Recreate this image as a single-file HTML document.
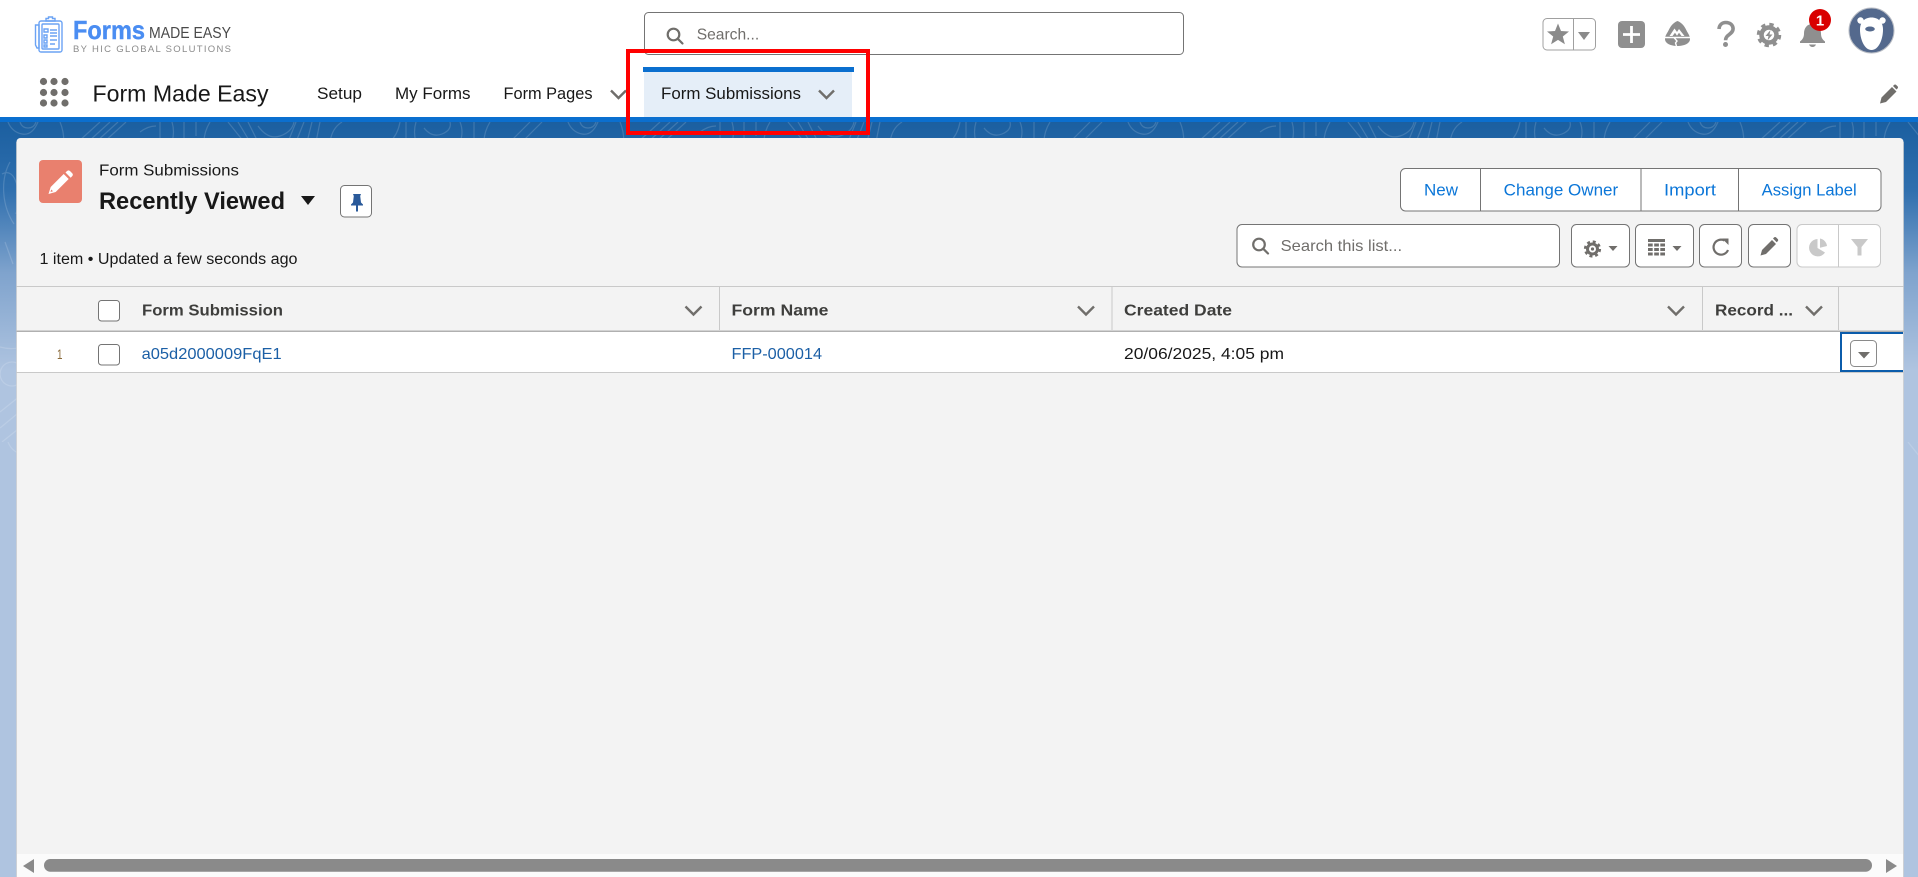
<!DOCTYPE html>
<html lang="en">
<head>
<meta charset="utf-8">
<title>Form Made Easy</title>
<style>
html,body{margin:0;padding:0;width:1918px;height:877px;overflow:hidden;background:#fff}
svg{display:block}
text{font-family:"Liberation Sans",Arial,sans-serif;white-space:pre}
</style>
</head>
<body>
<svg xmlns="http://www.w3.org/2000/svg" width="1918" height="877" viewBox="0 0 1918 877">
<defs>
<linearGradient id="bg" x1="0" y1="122" x2="0" y2="877" gradientUnits="userSpaceOnUse">
<stop offset="0" stop-color="#1b5fa0"/>
<stop offset="0.09" stop-color="#2f6fae"/>
<stop offset="0.2" stop-color="#7fa3cd"/>
<stop offset="0.33" stop-color="#afc4e0"/>
<stop offset="1" stop-color="#afc4e0"/>
</linearGradient>
<pattern id="contour" x="0" y="122" width="560" height="320" patternUnits="userSpaceOnUse">
<g fill="none" stroke="#fff" stroke-opacity=".15" stroke-width="1.200">
<path d="M8 0q4 10 14 12t16-12M20 0q2 6 8 6t8-6M60 0c6 14 4 30 0 40M78 20L100 0M88 20L110 0M96 20L118 0M104 20L126 0M140 10q8-6 16-6M160 0v20M172 0q3 10 0 20M184 0v20M196 0v14M210 0q-6 10-6 20M228 0l16 20M238 0l12 20M248 0l10 20M258 4q10 14 22 10t14-14M296 0l-8 20M304 0l-8 20M312 0l-5 20M320 0l-4 20M330 20q2-14 12-20M390 20q8-8 10-20M406 0v20M416 0q-3 10 0 20M424 6q8 10 18 6t8-12M460 0q4 10 0 20M474 0v20M490 0q-6 10-6 20M510 20l20-20M522 20l20-20"/>
<path d="M10 40c-10 18-8 44 4 62M2 52c14-8 20 20 14 40M5 120l8 22M30 160c-14 10-14 40 0 52M0 225q14 4 28-2M12 240a12 12 0 1 0 .1 0M0 290l30-24M0 306l34-28M2 320l30-24"/>
</g>
</pattern>
</defs>

<!-- page background -->
<rect x="0" y="122" width="1918" height="755" fill="url(#bg)"/>
<rect x="0" y="122" width="1918" height="340" fill="url(#contour)"/>

<!-- white header -->
<rect x="0" y="0" width="1918" height="117" fill="#fff"/>
<rect x="0" y="117" width="1918" height="5" fill="#0b6fcf"/>

<!-- logo -->
<g fill="none" stroke="#6ba3f4" stroke-width="1.400">
<rect x="39" y="21" width="23" height="31" rx="2"/>
<rect x="42" y="24" width="17" height="25" rx="1"/>
<path d="M46 21v-2.500h2.500v-1.500h4v1.500h2.500v2.500z"/>
<path d="M35.500 25h3.500v23h-2l-1.500-3z"/>
<path d="M44 29h4v3h-4zM44 35h3v3h-3zM44 40h3v3h-3zM44 45h3v2h-3zM50 30h7M50 33h7M50 36h7M50 40h7M50 44h5"/>
</g>
<text x="73" y="39" font-size="26" font-weight="700" fill="#4a8df2" stroke="#4a8df2" stroke-width=".4" textLength="72" lengthAdjust="spacingAndGlyphs">Forms</text>
<text x="149" y="38" font-size="15.500" fill="#4a4a4a" textLength="82" lengthAdjust="spacingAndGlyphs">MADE EASY</text>
<text x="73" y="52" font-size="9.500" fill="#8b8b8b" textLength="158" lengthAdjust="spacing">BY HIC GLOBAL SOLUTIONS</text>

<!-- global search -->
<rect x="644.500" y="12.500" width="539" height="42" rx="4" fill="#fff" stroke="#747474"/>
<g fill="none" stroke="#706e6b" stroke-width="2.200">
<circle cx="673.500" cy="34.500" r="5.800"/>
<path d="M677.800 38.800l4.700 4.700" stroke-linecap="round"/>
</g>
<text x="696.700" y="39.500" font-size="16" fill="#706e6b" textLength="62.500" lengthAdjust="spacingAndGlyphs">Search...</text>

<!-- header utilities -->
<rect x="1543" y="18.500" width="52.500" height="31.500" rx="4" fill="#fff" stroke="#a0a0a0"/>
<path d="M1573.500 18.500v31.500" stroke="#a0a0a0"/>
<path d="M1558 23.500l3 7.500 8 .5-6.200 5 2.100 7.800-6.900-4.400-6.900 4.400 2.100-7.800-6.200-5 8-.5z" fill="#8a8a8a"/>
<path d="M1578 32h12l-6 8z" fill="#8a8a8a"/>
<rect x="1618" y="21" width="27" height="27" rx="4" fill="#8f8f8f"/>
<path d="M1631.500 26v17M1623 34.500h17" stroke="#fff" stroke-width="2.800"/>
<path d="M1677.500 21c4 1.500 7 5 9 9.500 1.500 3 3.500 5 3.500 8.500 0 4.500-6 7-12.500 7s-12.500-2.500-12.500-7c0-3.500 2-5.500 3.500-8.500 2-4.500 5-8 9-9.500z" fill="#8f8f8f"/>
<path d="M1664 37.500h27M1674 37.500l3 3.500-1.500 2 1 3" fill="none" stroke="#fff" stroke-width="1.400"/>
<path d="M1669.500 36l5-7.500 2.500 3.500 2-3 5.500 7h-3l-2.500-3.200-2 3-2-3-2.500 3.200z" fill="#fff"/>
<path d="M1719 29c.3-4.500 3.500-6.500 6.800-6.500 4.500 0 7.300 2.700 7.300 6.300 0 5.500-7.500 5.500-7.500 11.500" fill="none" stroke="#8f8f8f" stroke-width="3.600"/>
<circle cx="1725.500" cy="44.500" r="2.500" fill="#8f8f8f"/>
<g transform="translate(1769 35)">
<circle r="7.500" fill="none" stroke="#8f8f8f" stroke-width="4.500"/>
<circle r="10.500" fill="none" stroke="#8f8f8f" stroke-width="3.500" stroke-dasharray="4.250 4"/>
<path d="M1.500-5l-5 6h3l-1 4.500 5-6h-3z" fill="#8f8f8f"/>
</g>
<path d="M1812.500 24c5.500 0 8.500 4 8.500 9.500 0 4 1.500 6 4 8v1.500h-25v-1.500c2.500-2 4-4 4-8 0-5.500 3-9.500 8.500-9.500z" fill="#8f8f8f"/>
<path d="M1809 44.500h7c-.5 1.500-2 2.500-3.500 2.500s-3-1-3.500-2.500z" fill="#8f8f8f"/>
<circle cx="1820" cy="20" r="11" fill="#d90000"/>
<text x="1820" y="25.500" font-size="15" font-weight="700" fill="#fff" text-anchor="middle">1</text>
<ellipse cx="1871.500" cy="30.500" rx="22.500" ry="22.500" fill="#54698d" stroke="#b8bcc4" stroke-width="1"/>
<circle cx="1860.500" cy="20.500" r="3.200" fill="#fff"/>
<circle cx="1882.500" cy="20.500" r="3.200" fill="#fff"/>
<path d="M1871.500 17.500c7 0 11.500 4.500 11.500 12 0 10-4.500 20.500-11.500 20.500s-11.500-10.500-11.500-20.500c0-7.500 4.500-12 11.500-12z" fill="#fff"/>
<ellipse cx="1870" cy="29" rx="4.800" ry="2.500" fill="#54698d"/>

<!-- app nav -->
<g fill="#706e6b">
<circle cx="43.500" cy="81.500" r="3.600"/><circle cx="54" cy="81.500" r="3.600"/><circle cx="65" cy="81.500" r="3.600"/>
<circle cx="43.500" cy="92.500" r="3.600"/><circle cx="54" cy="92.500" r="3.600"/><circle cx="65" cy="92.500" r="3.600"/>
<circle cx="43.500" cy="103" r="3.600"/><circle cx="54" cy="103" r="3.600"/><circle cx="65" cy="103" r="3.600"/>
</g>
<text x="92.500" y="101.500" font-size="23" fill="#181818" textLength="176" lengthAdjust="spacingAndGlyphs">Form Made Easy</text>
<text x="317" y="99" font-size="16.500" fill="#181818" textLength="45" lengthAdjust="spacingAndGlyphs">Setup</text>
<text x="395" y="99" font-size="16.500" fill="#181818" textLength="75.500" lengthAdjust="spacingAndGlyphs">My Forms</text>
<text x="503.500" y="99" font-size="16.500" fill="#181818" textLength="89" lengthAdjust="spacingAndGlyphs">Form Pages</text>
<path d="M611 90.500l7.500 7.500 7.500-7.500" fill="none" stroke="#706e6b" stroke-width="2.400"/>
<rect x="644" y="72" width="208" height="45" fill="#e5eef8"/>
<rect x="643" y="67" width="211" height="5" fill="#0b6fcf"/>
<text x="661" y="99" font-size="16.500" fill="#181818" textLength="140" lengthAdjust="spacingAndGlyphs">Form Submissions</text>
<path d="M819 90.500l7.500 7.500 7.500-7.500" fill="none" stroke="#706e6b" stroke-width="2.400"/>
<path d="M1880 103.500l1.500-6 10.500-10.500 4.500 4.500-10.500 10.500z M1893 86l1-1c.7-.7 1.500-.7 2.200 0l1.300 1.300c.7.7.7 1.500 0 2.200l-1 1z" fill="#706e6b"/>

<!-- card -->
<path d="M16.500 142a4 4 0 0 1 4-4H1899.500a4 4 0 0 1 4 4V877H16.500z" fill="#f3f3f3"/>
<path d="M16.500 142V877M1903.500 142V877" stroke="#c9c9c9" stroke-opacity=".6"/>

<!-- list header -->
<rect x="39" y="160" width="43" height="43" rx="4" fill="#e9806e"/>
<path d="M48.500 194l2.200-7 13-13 5 5-13 13zM65.500 172.500l1.400-1.400c1-1 2.200-1 3.200 0l2 2c1 1 1 2.200 0 3.200l-1.400 1.400z" fill="#fff"/>
<path d="M50.500 192l.8-2.500 1.700 1.700z" fill="#e9806e"/>
<text x="99" y="175.500" font-size="16" fill="#181818" textLength="140" lengthAdjust="spacingAndGlyphs">Form Submissions</text>
<text x="99" y="209" font-size="24" font-weight="700" fill="#181818" textLength="186" lengthAdjust="spacingAndGlyphs">Recently Viewed</text>
<path d="M301 196h14l-7 9z" fill="#181818"/>
<rect x="340.500" y="185.500" width="31" height="31.500" rx="4" fill="#fff" stroke="#747474"/>
<path d="M353 194h8l-.8 2 .8 6.500 2 2v1h-5v6h-2v-6h-5v-1l2-2 .8-6.500z" fill="#2a5a9a"/>
<text x="39.500" y="264" font-size="15.500" fill="#181818" textLength="258" lengthAdjust="spacingAndGlyphs">1 item • Updated a few seconds ago</text>

<!-- action buttons -->
<rect x="1400.500" y="168.500" width="480.500" height="42.500" rx="5" fill="#fff" stroke="#747474"/>
<path d="M1480.500 168.500v42.500M1641 168.500v42.500M1738.500 168.500v42.500" stroke="#747474"/>
<g font-size="16.500" fill="#0b76d8">
<text x="1424" y="195.500" textLength="34" lengthAdjust="spacingAndGlyphs">New</text>
<text x="1503.700" y="195.500" textLength="114.500" lengthAdjust="spacingAndGlyphs">Change Owner</text>
<text x="1664" y="195.500" textLength="52" lengthAdjust="spacingAndGlyphs">Import</text>
<text x="1761.700" y="195.500" textLength="95" lengthAdjust="spacingAndGlyphs">Assign Label</text>
</g>

<!-- list search -->
<rect x="1237" y="224.500" width="322.500" height="42.500" rx="5" fill="#fff" stroke="#747474"/>
<g fill="none" stroke="#706e6b" stroke-width="2.200">
<circle cx="1259" cy="244.500" r="5.800"/>
<path d="M1263.300 248.800l4.700 4.700" stroke-linecap="round"/>
</g>
<text x="1280.600" y="251.200" font-size="16" fill="#706e6b" textLength="121.500" lengthAdjust="spacingAndGlyphs">Search this list...</text>

<!-- list controls -->
<g fill="#fff" stroke="#747474">
<rect x="1571.500" y="224.500" width="58" height="42.500" rx="5"/>
<rect x="1635.500" y="224.500" width="58" height="42.500" rx="5"/>
<rect x="1699.500" y="224.500" width="42" height="42.500" rx="5"/>
<rect x="1748.500" y="224.500" width="42" height="42.500" rx="5"/>
</g>
<rect x="1797" y="224.500" width="83.500" height="42.500" rx="5" fill="#fff" stroke="#c9c9c9"/>
<path d="M1838.500 224.500v42.500" stroke="#c9c9c9"/>
<g transform="translate(1592.500 249)">
<circle r="5" fill="none" stroke="#706e6b" stroke-width="3"/>
<circle r="7.200" fill="none" stroke="#706e6b" stroke-width="2.800" stroke-dasharray="2.900 2.760"/>
<circle r="1.600" fill="#706e6b"/>
</g>
<path d="M1608.500 246h9l-4.500 5zM1672.500 246h9l-4.500 5z" fill="#706e6b"/>
<g fill="#706e6b">
<rect x="1648" y="239" width="17" height="3"/>
<path d="M1648 243.500h4.700v3h-4.700zM1654.200 243.500h4.700v3h-4.700zM1660.300 243.500h4.700v3h-4.700zM1648 248h4.700v3h-4.700zM1654.200 248h4.700v3h-4.700zM1660.300 248h4.700v3h-4.700zM1648 252.500h4.700v3h-4.700zM1654.200 252.500h4.700v3h-4.700zM1660.300 252.500h4.700v3h-4.700z"/>
</g>
<path d="M1728 250a7.500 7.500 0 1 1-3.500-9.500" fill="none" stroke="#706e6b" stroke-width="2.200"/>
<path d="M1722 238.500h6.500v6.500z" fill="#706e6b"/>
<path d="M1760.500 255.500l1.500-5.500 10-10 4 4-10 10zM1773 238.500l1-1c.7-.7 1.500-.7 2.200 0l1.500 1.500c.7.7.7 1.500 0 2.200l-1 1z" fill="#706e6b"/>
<path d="M1817.500 239v9l7.500 4.500a8.700 8.700 0 1 1-7.500-13.500zM1820 238.500a8.500 8.500 0 0 1 7 7.500l-7 1.800z" fill="#c9c9c9"/>
<path d="M1851 239h17l-6.500 8v8.500h-4v-8.500z" fill="#c9c9c9"/>

<!-- table -->
<rect x="16.500" y="286" width="1887" height="1" fill="#c9c9c9"/>
<rect x="17" y="332" width="1886" height="40" fill="#fff"/>
<rect x="16.500" y="330.500" width="1887" height="1.500" fill="#b0b0b0"/>
<rect x="16.500" y="372" width="1887" height="1" fill="#c9c9c9"/>
<path d="M719.500 287v43M1112 287v43M1702.500 287v43M1838.500 287v43" stroke="#c9c9c9"/>
<rect x="98.500" y="300.500" width="21" height="20.500" rx="3" fill="#fff" stroke="#747474"/>
<rect x="98.500" y="344.500" width="21" height="20.500" rx="3" fill="#fff" stroke="#747474"/>
<g font-size="16" font-weight="700" fill="#3e3e3c">
<text x="142" y="315.500" textLength="141" lengthAdjust="spacingAndGlyphs">Form Submission</text>
<text x="731.500" y="315.500" textLength="97" lengthAdjust="spacingAndGlyphs">Form Name</text>
<text x="1124" y="315.500" textLength="108" lengthAdjust="spacingAndGlyphs">Created Date</text>
<text x="1715" y="315.500" textLength="78" lengthAdjust="spacingAndGlyphs">Record ...</text>
</g>
<g fill="none" stroke="#706e6b" stroke-width="2.400">
<path d="M685.500 306.500l8 8 8-8M1078 306.500l8 8 8-8M1668 306.500l8 8 8-8M1806 306.500l8 8 8-8"/>
</g>
<text x="57" y="359" font-size="14" fill="#8a6a3a" textLength="5.500" lengthAdjust="spacingAndGlyphs">1</text>
<text x="141.600" y="359" font-size="16" fill="#1b5fa6" textLength="140" lengthAdjust="spacingAndGlyphs">a05d2000009FqE1</text>
<text x="731.500" y="359" font-size="16" fill="#1b5fa6" textLength="90.500" lengthAdjust="spacingAndGlyphs">FFP-000014</text>
<text x="1124" y="359" font-size="16" fill="#181818" textLength="160" lengthAdjust="spacingAndGlyphs">20/06/2025, 4:05 pm</text>
<path d="M1903 333H1841V371H1903" fill="#fff" stroke="#0b5cab" stroke-width="2"/>
<rect x="1850.500" y="340.500" width="26" height="26" rx="4" fill="#fff" stroke="#8a8a8a"/>
<path d="M1858 352h12l-6 6.500z" fill="#706e6b"/>

<!-- horizontal scrollbar -->
<rect x="17" y="854" width="1886" height="23" fill="#fbfbfb"/>
<path d="M34 859v14l-11-7z" fill="#8a8a8a"/>
<rect x="44" y="859" width="1828" height="12.700" rx="6.300" fill="#8a8a8a"/>
<path d="M1886 859v14l11-7z" fill="#8a8a8a"/>

<!-- red annotation -->
<rect x="628" y="51" width="240" height="82" fill="none" stroke="#ff0000" stroke-width="4"/>
</svg>
</body>
</html>
